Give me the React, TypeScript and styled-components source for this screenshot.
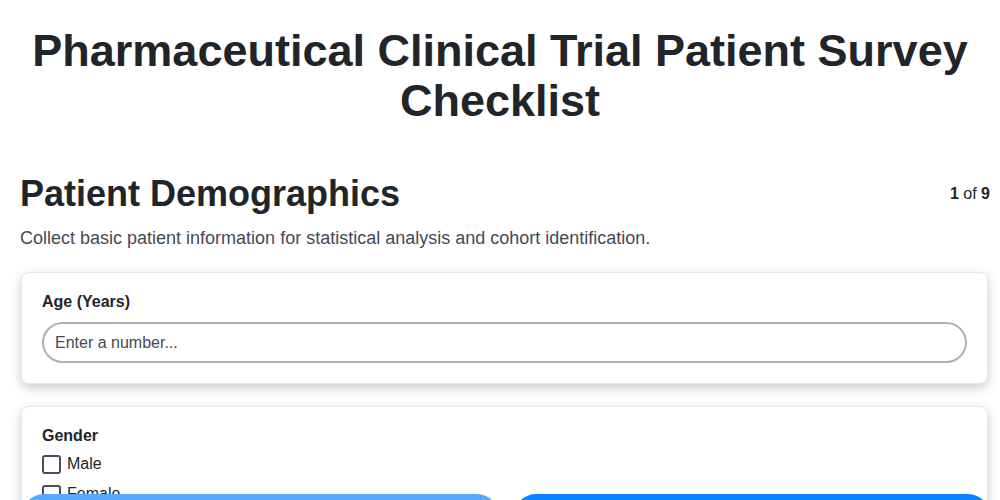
import React from 'react';
import styled, { createGlobalStyle } from 'styled-components';

const GlobalStyle = createGlobalStyle`
  * {
    box-sizing: border-box;
  }

  body {
    margin: 0;
    background: #ffffff;
    color: #212529;
    font-family: 'Liberation Sans', Arial, sans-serif;
  }
`;

const Page = styled.div`
  display: flex;
  flex-direction: column;
  padding-bottom: 80px;
`;

const Title = styled.h1`
  margin: 26px 0 0;
  padding: 0 20px;
  text-align: center;
  font-size: 45px;
  line-height: 50px;
  font-weight: 700;
  color: #212529;
`;

const Section = styled.section`
  display: flex;
  flex-direction: column;
  padding: 0 10px 0 20px;
  margin-top: 46px;
`;

const SectionHeader = styled.div`
  display: flex;
  justify-content: space-between;
  align-items: center;
`;

const SectionTitle = styled.h2`
  margin: 0;
  font-size: 36px;
  line-height: 44px;
  font-weight: 700;
  color: #212529;
`;

const Progress = styled.span`
  font-size: 16px;
  color: #212529;

  b {
    font-weight: 700;
  }
`;

const Description = styled.p`
  margin: 10px 0 0;
  font-size: 18px;
  line-height: 24px;
  color: #444a52;
`;

const Questions = styled.div`
  display: flex;
  flex-direction: column;
  gap: 22px;
  margin-top: 22px;
`;

const Card = styled.div`
  margin: 0 2px 0 1px;
  padding: 19px 20px 20px;
  background: #ffffff;
  border: 1px solid #e6e6ee;
  border-radius: 8px;
  box-shadow: 0 4px 12px rgba(0, 0, 0, 0.2);
`;

const Label = styled.label`
  display: block;
  font-size: 16px;
  line-height: 20px;
  font-weight: 700;
  color: #212529;
  margin-bottom: 10px;
`;

const TextInput = styled.input`
  display: block;
  width: 100%;
  height: 41px;
  padding: 0 11px;
  border: 2px solid #a9b2bc;
  border-radius: 999px;
  font-family: inherit;
  font-size: 16px;
  color: #212529;
  background: #ffffff;
  outline: none;

  &::placeholder {
    color: #444a52;
  }
`;

const Options = styled.div`
  display: flex;
  flex-direction: column;
  gap: 6px;
  margin-top: -4px;
`;

const Option = styled.label`
  display: flex;
  align-items: center;
  gap: 6px;
  font-size: 16px;
  line-height: 24px;
  color: #212529;
`;

const Box = styled.span`
  width: 19px;
  height: 19px;
  border: 2px solid #4a4d5e;
  border-radius: 3px;
  background: #ffffff;
`;

const Nav = styled.div`
  position: fixed;
  left: 22px;
  right: 10px;
  bottom: -38px;
  display: grid;
  grid-template-columns: 1fr 1fr;
  gap: 15px;
`;

const NavButton = styled.button<{ $primary?: boolean }>`
  height: 44px;
  border: none;
  border-radius: 22px;
  background: ${(p) => (p.$primary ? '#0a82ff' : '#58a9ff')};
  color: #ffffff;
  font-family: inherit;
  font-size: 16px;
  font-weight: 700;
`;

const App = () => {
  return (
    <Page>
      <GlobalStyle />
      <Title>Pharmaceutical Clinical Trial Patient Survey Checklist</Title>
      <Section>
        <SectionHeader>
          <SectionTitle>Patient Demographics</SectionTitle>
          <Progress>
            <b>1</b> of <b>9</b>
          </Progress>
        </SectionHeader>
        <Description>
          Collect basic patient information for statistical analysis and cohort identification.
        </Description>
        <Questions>
          <Card>
            <Label>Age (Years)</Label>
            <TextInput type="number" placeholder="Enter a number..." />
          </Card>
          <Card>
            <Label>Gender</Label>
            <Options>
              <Option>
                <Box />
                Male
              </Option>
              <Option>
                <Box />
                Female
              </Option>
              <Option>
                <Box />
                Other
              </Option>
            </Options>
          </Card>
        </Questions>
      </Section>
      <Nav>
        <NavButton>Previous</NavButton>
        <NavButton $primary>Next</NavButton>
      </Nav>
    </Page>
  );
};

export default App;
